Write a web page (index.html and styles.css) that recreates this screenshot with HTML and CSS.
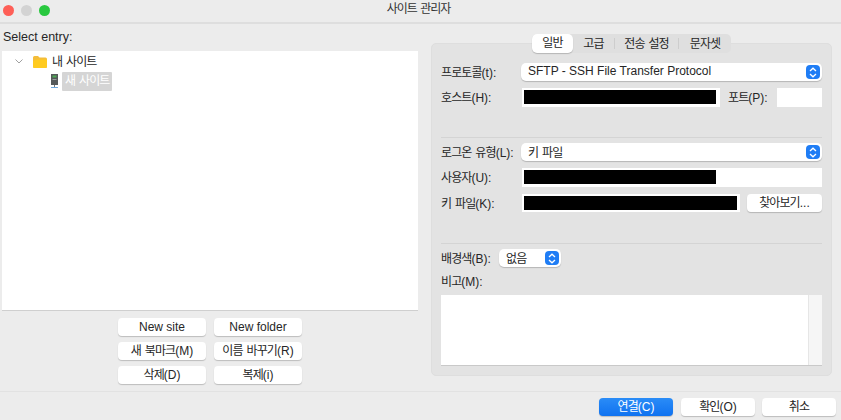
FILE: index.html
```html
<!DOCTYPE html>
<html lang="ko">
<head>
    <meta charset="UTF-8">
    <meta name="viewport" content="width=device-width, initial-scale=1.0">
    <title>사이트 관리자</title>
    <link rel="stylesheet" href="styles.css">
</head>
<body>
    <div class="window">
        <div class="titlebar">
            <div class="lights">
                <span class="light red"></span>
                <span class="light gray"></span>
                <span class="light green"></span>
            </div>
            <div class="title">사이트 관리자</div>
        </div>

        <div class="main">
            <div class="left">
                <div class="select-label">Select entry:</div>
                <div class="tree">
                    <div class="tree-row">
                        <svg class="chevron" width="8" height="5" viewBox="0 0 8 5"><path d="M0.5 0.5 L4 4 L7.5 0.5" fill="none" stroke="#a0a0a0" stroke-width="1"/></svg>
                        <svg class="folder" width="14" height="12" viewBox="0 0 14 12">
                            <path d="M0 1.5 Q0 0 1.5 0 H5 L6.5 1.5 H12.5 Q14 1.5 14 3 V10.5 Q14 12 12.5 12 H1.5 Q0 12 0 10.5 Z" fill="#f4bd3a"/>
                            <path d="M0 5 L4 3.6 H14 V10.5 Q14 12 12.5 12 H1.5 Q0 12 0 10.5 Z" fill="#ffcb1f"/>
                        </svg>
                        <span class="tree-text"><span class="ko">내 사이트</span></span>
                    </div>
                    <div class="tree-row child">
                        <svg class="server" width="9" height="15" viewBox="0 0 9 15">
                            <rect x="1" y="0" width="7" height="11" fill="#55595a"/>
                            <rect x="2.5" y="1.5" width="4" height="2" fill="#4fae55"/>
                            <rect x="2.5" y="5" width="4" height="1" fill="#9a9d9e"/>
                            <path d="M4.5 11 V13" stroke="#777" stroke-width="1"/>
                            <path d="M1 13.5 H8" stroke="#6fa8dc" stroke-width="1"/>
                        </svg>
                        <span class="tree-text selected"><span class="ko">새 사이트</span></span>
                    </div>
                </div>
                <div class="tree-buttons">
                    <button class="btn">New site</button>
                    <button class="btn">New folder</button>
                    <button class="btn"><span class="ko">새 북마크</span>(M)</button>
                    <button class="btn"><span class="ko">이름 바꾸기</span>(R)</button>
                    <button class="btn"><span class="ko">삭제</span>(D)</button>
                    <button class="btn"><span class="ko">복제</span>(i)</button>
                </div>
            </div>

            <div class="right">
                <div class="tabs">
                    <span class="tab active"><span class="ko">일반</span></span>
                    <span class="tab"><span class="ko">고급</span></span>
                    <span class="tab-sep"></span>
                    <span class="tab wide"><span class="ko">전송 설정</span></span>
                    <span class="tab-sep"></span>
                    <span class="tab last"><span class="ko">문자셋</span></span>
                </div>
                <div class="panel">
                    <div class="row first">
                        <label><span class="ko">프로토콜</span>(t):</label>
                        <div class="select grow">
                            <span class="select-text">SFTP - SSH File Transfer Protocol</span>
                            <span class="stepper"><svg width="8" height="11" viewBox="0 0 8 11"><path d="M1 4 L4 1.2 L7 4 M1 7 L4 9.8 L7 7" fill="none" stroke="#fff" stroke-width="1.3"/></svg></span>
                        </div>
                    </div>
                    <div class="row host">
                        <label><span class="ko">호스트</span>(H):</label>
                        <div class="input host-input"><div class="redact"></div></div>
                        <label class="port-label"><span class="ko">포트</span>(P):</label>
                        <div class="input port-input"></div>
                    </div>
                    <div class="divider div-one"></div>
                    <div class="row login">
                        <label><span class="ko">로그온 유형</span>(L):</label>
                        <div class="select grow">
                            <span class="select-text ko">키 파일</span>
                            <span class="stepper"><svg width="8" height="11" viewBox="0 0 8 11"><path d="M1 4 L4 1.2 L7 4 M1 7 L4 9.8 L7 7" fill="none" stroke="#fff" stroke-width="1.3"/></svg></span>
                        </div>
                    </div>
                    <div class="row user">
                        <label><span class="ko">사용자</span>(U):</label>
                        <div class="input grow user-input"><div class="redact"></div></div>
                    </div>
                    <div class="row keyfile">
                        <label><span class="ko">키 파일</span>(K):</label>
                        <div class="input key-input"><div class="redact key-redact"></div></div>
                        <button class="btn browse"><span class="ko">찾아보기</span>...</button>
                    </div>
                    <div class="divider div-two"></div>
                    <div class="row color">
                        <label class="color-label"><span class="ko">배경색</span>(B):</label>
                        <div class="select color-select">
                            <span class="select-text ko">없음</span>
                            <span class="stepper"><svg width="8" height="11" viewBox="0 0 8 11"><path d="M1 4 L4 1.2 L7 4 M1 7 L4 9.8 L7 7" fill="none" stroke="#fff" stroke-width="1.3"/></svg></span>
                        </div>
                    </div>
                    <div class="memo-label"><span class="ko">비고</span>(M):</div>
                    <div class="memo"><div class="memo-scroll"></div></div>
                </div>
            </div>
        </div>

        <div class="footer">
            <button class="btn primary"><span class="ko">연결</span>(C)</button>
            <button class="btn"><span class="ko">확인</span>(O)</button>
            <button class="btn"><span class="ko">취소</span></button>
        </div>
    </div>
</body>
</html>
```

FILE: styles.css
```css
* {
    box-sizing: border-box;
}
html, body {
    margin: 0;
    padding: 0;
}
body {
    width: 841px;
    height: 420px;
    overflow: hidden;
    background-color: #ececec;
    color: #262626;
    font-family: "Liberation Sans", "Noto Sans CJK KR", sans-serif;
    font-size: 12px;
}
/* hangul runs narrower in the original font */
.ko {
    letter-spacing: -0.9px;
    word-spacing: 1.5px;
}
.window {
    display: flex;
    flex-direction: column;
    height: 420px;
}
.titlebar {
    position: relative;
    height: 24px;
    border-bottom: 2px solid #dedede;
    background-color: #ececec;
}
.lights {
    display: flex;
    gap: 7px;
    padding: 5px 0 0 3px;
}
.light {
    width: 11px;
    height: 11px;
    border-radius: 50%;
}
.red { background-color: #fe5f57; }
.gray { background-color: #d3d3d3; }
.green { background-color: #29c83f; }
.title {
    position: absolute;
    top: 0;
    left: 0;
    width: 100%;
    padding-right: 4px;
    text-align: center;
    line-height: 19px;
    font-size: 12px;
    letter-spacing: -1.1px;
    word-spacing: 1.5px;
    color: #333;
}
.main {
    display: flex;
    height: 368px;
    border-bottom: 1px solid #e2e2e2;
}
.left {
    width: 431px;
    padding-left: 2px;
}
.select-label {
    height: 27px;
    padding: 6px 0 0 1px;
    line-height: 15px;
    font-size: 12.5px;
}
.tree {
    width: 416px;
    height: 260px;
    background-color: #fff;
    border-bottom: 1px solid #cfcfcf;
    padding-top: 1px;
}
.tree-row {
    display: flex;
    align-items: center;
    height: 19px;
    margin-bottom: 1px;
}
.chevron {
    margin-left: 13px;
    margin-right: 10px;
}
.folder {
    margin-right: 5px;
}
.child {
    padding-left: 48px;
}
.server {
    margin-right: 3px;
}
.tree-text {
    line-height: 18px;
    white-space: nowrap;
}
.selected {
    width: 50px;
    height: 19px;
    background-color: #d5d5d5;
    color: #fff;
    padding: 0 3px;
    border-radius: 1px;
}
.tree-buttons {
    display: grid;
    grid-template-columns: 88px 88px;
    grid-auto-rows: 18px;
    gap: 6px 8px;
    margin: 7px 0 0 116px;
}
.btn {
    height: 18px;
    padding: 0;
    border: none;
    border-radius: 4px;
    background-color: #fff;
    box-shadow: 0 1px 1px rgba(0, 0, 0, 0.2);
    color: #262626;
    font-family: inherit;
    font-size: 12px;
    line-height: 18px;
}
.right {
    position: relative;
    width: 401px;
    padding-top: 19px;
}
.tabs {
    position: absolute;
    top: 10px;
    left: 101px;
    display: flex;
    align-items: center;
    width: 199px;
    height: 19px;
    border-radius: 5px;
    background-color: #dfdfdf;
    z-index: 1;
}
.tab {
    flex: none;
    width: 41px;
    text-align: center;
    line-height: 18px;
}
.tab.wide {
    width: 63px;
}
.tab.last {
    width: 52px;
}
.tab.active {
    height: 19px;
    border-radius: 5px;
    background-color: #fff;
    box-shadow: 0 1px 1px rgba(0, 0, 0, 0.2);
}
.tab-sep {
    flex: none;
    width: 1px;
    height: 11px;
    background-color: #cdcdcd;
}
.panel {
    height: 333px;
    padding: 0 9px 0 9px;
    border-radius: 5px;
    background-color: #e3e3e3;
    border: 1px solid #dedede;
}
.row {
    display: flex;
    align-items: center;
}
.row label {
    flex: none;
    width: 80px;
    padding-bottom: 2px;
}
.row.first {
    margin-top: 19px;
    height: 18px;
}
.row.host {
    margin-top: 7px;
    height: 19px;
}
.row.login {
    margin-top: 5px;
    height: 18px;
}
.row.user {
    margin-top: 7px;
    height: 19px;
}
.row.keyfile {
    margin-top: 7px;
    height: 18px;
}
.row.color {
    margin-top: 5px;
    height: 18px;
}
.grow {
    flex: 1;
}
.select {
    display: flex;
    align-items: center;
    justify-content: space-between;
    height: 100%;
    padding: 0 2px 0 7px;
    border-radius: 5px;
    background-color: #fff;
    box-shadow: 0 1px 1px rgba(0, 0, 0, 0.2);
}
.select-text {
    padding-bottom: 2px;
}
.stepper {
    display: flex;
    align-items: center;
    justify-content: center;
    width: 14px;
    height: 14px;
    border-radius: 4px;
    background-color: #1f7df5;
}
.input {
    height: 100%;
    background-color: #fff;
    padding: 2px;
}
.host-input {
    width: 198px;
    margin-left: 1px;
}
.redact {
    width: 192px;
    height: 14px;
    background-color: #000;
}
.port-label.port-label {
    width: 49px;
    margin-left: 8px;
}
.port-input {
    width: 45px;
}
.user-input {
    margin-left: 1px;
}
.key-input {
    width: 218px;
    margin-left: 1px;
}
.key-redact {
    width: 213px;
}
.browse {
    width: 75px;
    margin-left: 7px;
}
.divider {
    height: 1px;
    background-color: #d4d4d4;
}
.div-one {
    margin-top: 30px;
}
.div-two {
    margin-top: 31px;
}
.row label.color-label {
    width: 58px;
}
.color-select {
    width: 62px;
}
.memo-label {
    margin-top: 8px;
    height: 15px;
    line-height: 15px;
}
.memo {
    display: flex;
    justify-content: flex-end;
    height: 71px;
    margin-top: 5px;
    background-color: #fff;
    border-bottom: 1px solid #c9c9c9;
}
.memo-scroll {
    width: 14px;
    background-color: #f6f6f6;
    border-left: 1px solid #e6e6e6;
}
.footer {
    display: flex;
    justify-content: flex-end;
    gap: 7px;
    padding: 6px 5px 0 0;
}
.footer .btn {
    width: 74px;
}
.primary.primary {
    margin-right: 1px;
    background-color: #1a7ff5;
    background-image: linear-gradient(#2a8cf7, #0f72f0);
    color: #fff;
}
```
